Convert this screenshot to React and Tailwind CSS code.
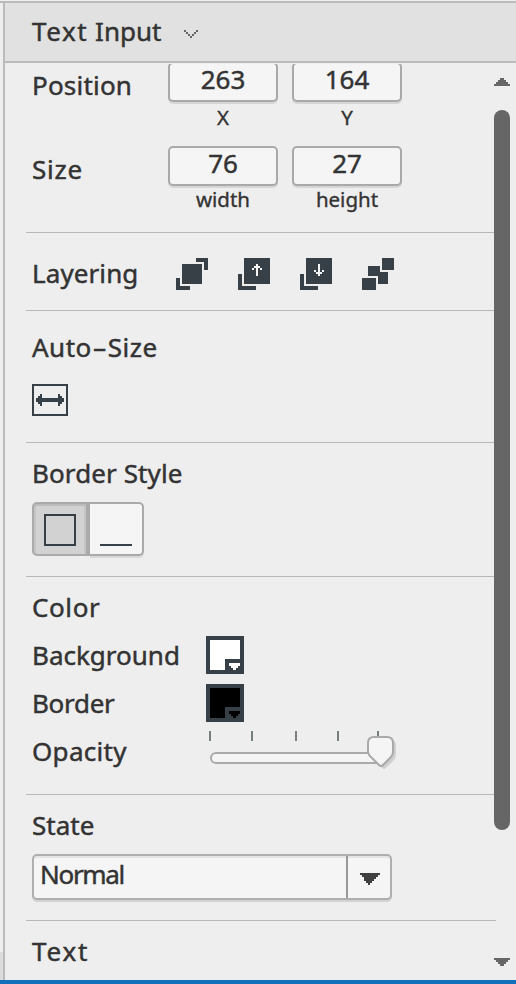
import React from 'react';

const INK = '#384047';

function Label({ children, className = '' }) {
  return (
    <div className={`h-8 shrink-0 whitespace-nowrap text-[26px] leading-8 text-[#333] [-webkit-text-stroke:0.45px_#333] ${className}`}>
      {children}
    </div>
  );
}

function Section({ className = '', children }) {
  return (
    <section className={`ml-[21px] shrink-0 border-b border-[#b9b9b9] pl-1.5 ${className}`}>
      {children}
    </section>
  );
}

function NumberField({ value, caption, captionClass }) {
  return (
    <div className="flex w-[110px] flex-col items-center">
      <div className="h-10 w-full rounded-[5px] border-2 border-[#a9a9a9] bg-[#f5f5f5] text-center text-[26px] leading-[30px] text-[#333] shadow-[0_2px_0_#d6d6d6] [-webkit-text-stroke:0.45px_#333]">
        {value}
      </div>
      <div className={`whitespace-nowrap text-[20.5px] text-[#333] [-webkit-text-stroke:0.35px_#333] ${captionClass}`}>{caption}</div>
    </div>
  );
}

function LayerIcon({ children }) {
  return (
    <svg width="32" height="32" viewBox="0 0 32 32" fill={INK} shapeRendering="crispEdges">
      {children}
    </svg>
  );
}

function Swatch({ color }) {
  return (
    <svg width="38" height="38" viewBox="0 0 38 38" shapeRendering="crispEdges">
      <rect width="38" height="38" fill={INK} />
      <path d="M4 4h30v19H19v11H4z" fill={color} />
      <path d="M23 27h11v3h-2v2h-2v2h-3v-2h-2v-2h-2z" fill={color} />
    </svg>
  );
}

export default function App() {
  return (
    <div className="flex h-[984px] w-[516px] flex-col overflow-hidden bg-[#eee] font-['Noto_Sans',sans-serif]">
      <div className="flex h-[980px] border-t border-[#eee]">
        <div className="flex w-[3px] shrink-0 flex-col justify-end border-t-2 border-[#bbb]">
          <div className="h-7 bg-[#dcdcdc]" />
        </div>
        <div className="flex w-[513px] flex-col border-l-2 border-t-2 border-[#bbb]">
          <header className="relative z-10 flex h-[60px] shrink-0 border-b-2 border-[#bbb] bg-[#e1e1e1] pl-[27px] pt-3 shadow-[0_1px_0_#eee]">
            <Label className="w-[152px]">
              <span className="tracking-[1.6px]">Text</span> <span>Input</span>
            </Label>
            <svg className="mt-[15px]" width="14" height="8" viewBox="0 0 14 8" fill="#666" shapeRendering="crispEdges">
              <path d="M0 0h2v2H0zM2 2h2v2H2zM4 4h2v2H4zM6 6h2v2H6zM8 4h2v2H8zM10 2h2v2h-2zM12 0h2v2h-2z" />
            </svg>
          </header>
          <div className="mt-px flex h-[916px]">
            <main className="flex w-[491px] shrink-0 flex-col">
              <Section className="h-[169px]">
                <div className="-mt-0.5 flex h-[84px]">
                  <Label className="mt-[7px] w-[136px] tracking-[0.2px]">Position</Label>
                  <div className="flex gap-3.5">
                    <NumberField value="263" caption="X" captionClass="leading-[30px]" />
                    <NumberField value="164" caption="Y" captionClass="leading-[30px]" />
                  </div>
                </div>
                <div className="flex">
                  <Label className="mt-[7px] w-[136px] tracking-[0.8px]">Size</Label>
                  <div className="flex gap-3.5">
                    <NumberField value="76" caption="width" captionClass="leading-[27px]" />
                    <NumberField value="27" caption="height" captionClass="leading-[27px]" />
                  </div>
                </div>
              </Section>

              <Section className="flex h-[78px] pt-6">
                <Label className="w-36 tracking-[0.1px]">Layering</Label>
                <div className="flex gap-[30px] pt-px">
                  <LayerIcon>
                    <path d="M6 6h20v20H6zM20 0h12v12h-4V4h-8zM0 20h4v8h10v4H0z" />
                  </LayerIcon>
                  <LayerIcon>
                    <path d="M6 0h26v26H6zM0 16h4v12h14v4H0z" />
                    <path d="M18 6h2v2h2v2h2v2h-2v-2h-2v8h-2v-8h-2v2h-2v-2h2V8h2z" fill="#f5f5f5" />
                  </LayerIcon>
                  <LayerIcon>
                    <path d="M6 0h26v26H6zM0 16h4v12h14v4H0z" />
                    <path d="M18 18h2v-2h2v-2h2v-2h-2v2h-2V6h-2v8h-2v-2h-2v2h2v2h2z" fill="#f5f5f5" />
                  </LayerIcon>
                  <LayerIcon>
                    <path d="M20 0h12v12H20zM6 8h12v6h8v12h-10v-8H6zM0 20h14v12H0z" />
                  </LayerIcon>
                </div>
              </Section>

              <Section className="h-[132px] pt-5">
                <Label className="tracking-[0.5px]">
                  Auto<span className="inline-block w-4 scale-x-[1.7] text-center">-</span>Size
                </Label>
                <div className="mt-[21px] flex h-8 w-9 items-center justify-center border-2 border-[#384047]">
                  <svg width="28" height="12" viewBox="0 0 28 12" fill={INK} shapeRendering="crispEdges">
                    <path d="M0 4h2V2h2V0h2v4h16V0h2v2h2v2h2v4h-2v2h-2v2h-2V8H6v4H4v-2H2V8H0z" />
                  </svg>
                </div>
              </Section>

              <Section className="h-[134px] pt-[14px]">
                <Label className="tracking-[0.1px]">Border Style</Label>
                <div className="mt-[13px] flex h-[54px] w-28">
                  <div className="flex w-[58px] justify-center rounded-l-[5px] border-2 border-r-4 border-[#aaa] bg-[#d2d2d2] pt-2.5 shadow-[inset_0_2px_0_#bcbcbc,inset_-2px_0_0_#c6c6c6,inset_2px_0_0_#c6c6c6]">
                    <div className="size-8 border-2 border-[#384047]" />
                  </div>
                  <div className="w-[54px] rounded-r-[5px] border-2 border-l-0 border-[#aaa] bg-[#f5f5f5] pl-2.5 pt-10 shadow-[0_2px_0_#d8d8d8]">
                    <div className="h-0.5 w-8 bg-[#384047]" />
                  </div>
                </div>
              </Section>

              <Section className="flex h-[218px] flex-col gap-4 pt-[14px]">
                <Label className="tracking-[0.6px]">Color</Label>
                <div className="flex h-8">
                  <Label className="w-[174px]">Background</Label>
                  <div className="-mt-[3px]"><Swatch color="#fff" /></div>
                </div>
                <div className="flex h-8">
                  <Label className="w-[174px] tracking-[-0.3px]">Border</Label>
                  <div className="-mt-[3px]"><Swatch color="#000" /></div>
                </div>
                <div className="flex h-8">
                  <Label className="w-[174px] tracking-[0.3px]">Opacity</Label>
                  <svg className="-mt-1 shrink-0" width="192" height="40" viewBox="0 0 192 40">
                    <path d="M3 0h2v10H3zM45 0h2v10h-2zM89 0h2v10h-2zM131 0h2v10h-2zM171 0h2v10h-2z" fill="#78807e" />
                    <rect x="5" y="22" width="175" height="10" rx="5" fill="#f5f5f5" stroke="#aaa" strokeWidth="2" />
                    <path d="M170 8h13q7 0 7 7v8q0 4-3 7l-7 7q-2 2-4 0l-9-10z" fill="#cfcfcf" />
                    <path d="M168 6h13q6 0 6 6v9q0 3-3 6l-7 7q-2 2-4 0l-7-7q-4-3-4-7v-8q0-6 6-6z" fill="#f5f5f5" stroke="#a9a9a9" strokeWidth="2" />
                  </svg>
                </div>
              </Section>

              <Section className="h-[126px] pt-[14px]">
                <Label>State</Label>
                <div className="mt-[13px] flex h-[46px] w-[360px] rounded-[5px] border-2 border-[#afafaf] bg-[#f5f5f5] shadow-[0_2px_0_#d3d3d3,inset_0_2px_0_#e5e5e5]">
                  <Label className="w-[312px] pl-1.5 pt-0.5 tracking-[-1.3px]">Normal</Label>
                  <div className="flex flex-1 justify-end border-l-2 border-[#999] pr-2.5 pt-[17px]">
                    <svg width="20" height="12" viewBox="0 0 20 12" fill="#404040" shapeRendering="crispEdges">
                      <path d="M0 0h20v2h-2v2h-2v2h-2v2h-2v2h-2v2H8v-2H6V8H4V6H4V4H2V2H0z" />
                    </svg>
                  </div>
                </div>
              </Section>

              <div className="pl-[27px] pt-[14px]">
                <Label className="tracking-[1.8px]">Text</Label>
              </div>
            </main>
            <aside className="z-10 -ml-0.5 flex w-4 shrink-0 flex-col pt-[14px]">
              <svg width="16" height="8" viewBox="0 0 16 8" fill="#666" shapeRendering="crispEdges">
                <path d="M0 8V6h2V4h2V2h2V0h4v2h2v2h2v2h2v2z" />
              </svg>
              <div className="mt-6 h-[720px] rounded-full bg-[#666]" />
              <svg className="mt-32" width="16" height="8" viewBox="0 0 16 8" fill="#666" shapeRendering="crispEdges">
                <path d="M0 0v2h2v2h2v2h2v2h4V6h2V4h2V2h2V0z" />
              </svg>
            </aside>
          </div>
        </div>
      </div>
      <div className="h-1 shrink-0 bg-[#1070bc]" />
    </div>
  );
}
